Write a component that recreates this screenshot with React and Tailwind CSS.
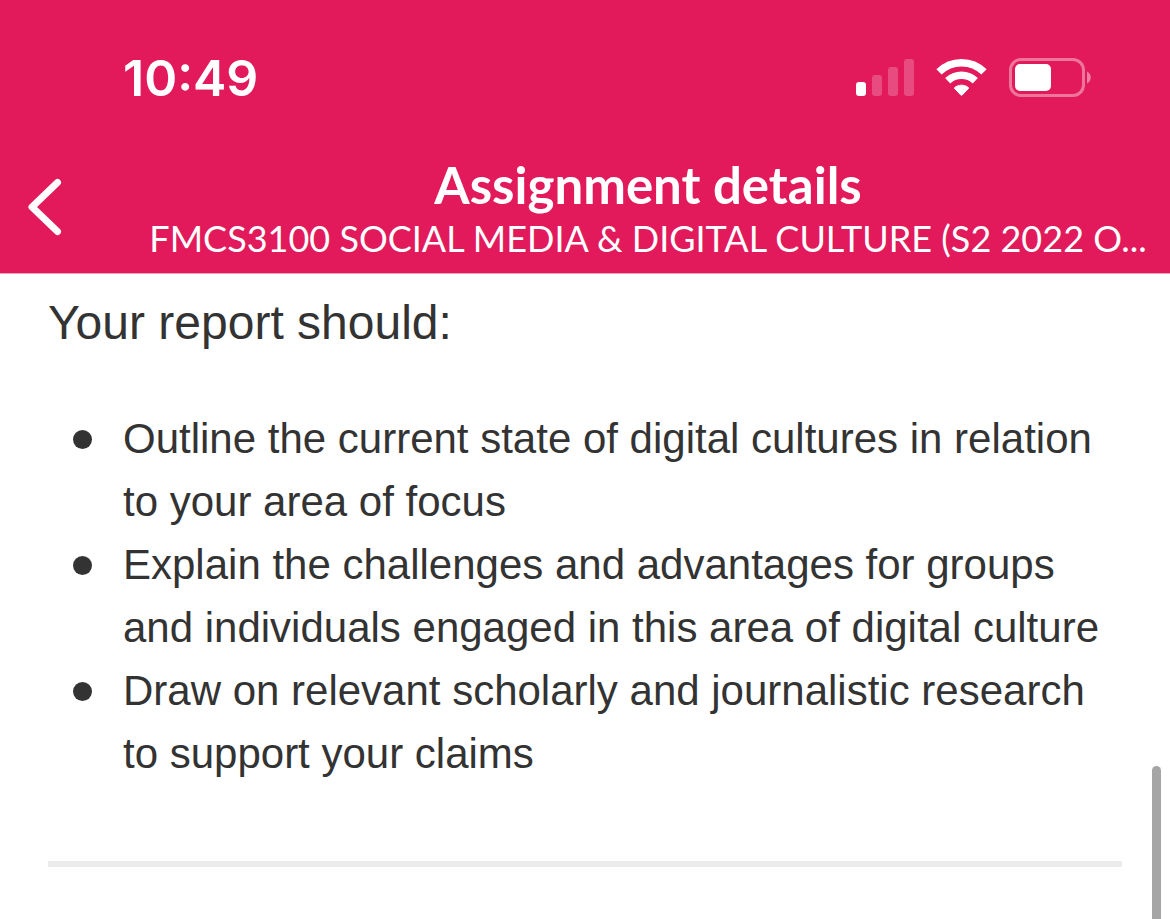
const points = [
  'Outline the current state of digital cultures in relation to your area of focus',
  'Explain the challenges and advantages for groups and individuals engaged in this area of digital culture',
  'Draw on relevant scholarly and journalistic research to support your claims',
];

const SignalIcon = () => (
  <svg width="58" height="38" viewBox="0 0 58 38" fill="#fff" aria-hidden="true">
    <rect x="0" y="24" width="10" height="14" rx="3" />
    <rect x="16" y="17" width="10" height="21" rx="3" opacity="0.22" />
    <rect x="32" y="9" width="10" height="29" rx="3" opacity="0.22" />
    <rect x="48" y="1" width="10" height="37" rx="3" opacity="0.22" />
  </svg>
);

const WifiIcon = () => (
  <svg width="51" height="38" viewBox="0 0 51 38" aria-hidden="true">
    <g fill="none" stroke="#fff" strokeWidth="7.5">
      <path d="M3 13.9 A32 32 0 0 1 48 13.9" />
      <path d="M11.7 22.8 A20 20 0 0 1 39.3 22.8" />
    </g>
    <path
      d="M18.2 30 C22.2 26.2 28.8 26.2 32.8 30 L26.2 37 Q25.5 37.7 24.8 37 Z"
      fill="#fff"
      stroke="#fff"
      strokeWidth="1"
      strokeLinejoin="round"
    />
  </svg>
);

const BatteryIcon = () => (
  <svg width="82" height="40" viewBox="0 0 82 40" aria-hidden="true">
    <rect x="1.5" y="2.5" width="73" height="36" rx="10.5" fill="none" stroke="#fff" strokeWidth="3" opacity="0.4" />
    <rect x="6" y="7" width="36" height="27" rx="5" fill="#fff" />
    <path d="M78 14.5 C83 17 83 24 78 26.5 Z" fill="#fff" opacity="0.45" />
  </svg>
);

const App = () => {
  return (
    <div className="relative min-h-screen overflow-hidden bg-white font-['Liberation_Sans',sans-serif] text-[#333333]">
      <header className="border-b border-[#eda3b9] bg-[#e2195b] text-white">
        {/* Status bar */}
        <div className="flex items-center justify-between pt-12 pr-[79px] pl-[123px]">
          <time className="font-['Inter',sans-serif] text-[50px] leading-[60px] font-semibold">10:49</time>
          <div className="flex items-center gap-[22px] pb-0.5">
            <SignalIcon />
            <WifiIcon />
            <BatteryIcon />
          </div>
        </div>

        {/* Navigation */}
        <div className="flex items-center pt-[46px] pb-[13px] font-['Lato',sans-serif]">
          <button type="button" aria-label="Back" className="shrink-0 pl-7">
            <svg width="34" height="58" viewBox="0 0 34 58" fill="none" aria-hidden="true">
              <path
                d="M29.5 4.5 L4 29 L29.5 53.5"
                stroke="#fff"
                strokeWidth="7"
                strokeLinecap="round"
                strokeLinejoin="round"
              />
            </svg>
          </button>
          <div className="min-w-0 flex-1 pr-4 pl-[80px] text-center">
            <h1 className="text-[51px] leading-[62px] font-bold">Assignment details</h1>
            <p className="truncate text-[36px] leading-[44px]">FMCS3100 SOCIAL MEDIA &amp; DIGITAL CULTURE (S2 2022 O...</p>
          </div>
        </div>
      </header>

      <main className="px-12 pt-[19px]">
        <p className="text-[48px] leading-[60px]">Your report should:</p>
        <ul className="mt-[54px] text-[42px] leading-[63px]">
          {points.map((point) => (
            <li key={point} className="flex gap-[31px] pl-[25px]">
              <span className="mt-[23px] size-[19px] shrink-0 rounded-full bg-[#333333]" />
              <span>{point}</span>
            </li>
          ))}
        </ul>
        <hr className="mt-[76px] border-t-[6px] border-[#ebebeb]" />
      </main>

      {/* Scroll indicator */}
      <div className="absolute right-[9px] bottom-0 h-[153px] w-[9px] rounded-t-full bg-[#a5a5a5]" />
    </div>
  );
};

export default App;
